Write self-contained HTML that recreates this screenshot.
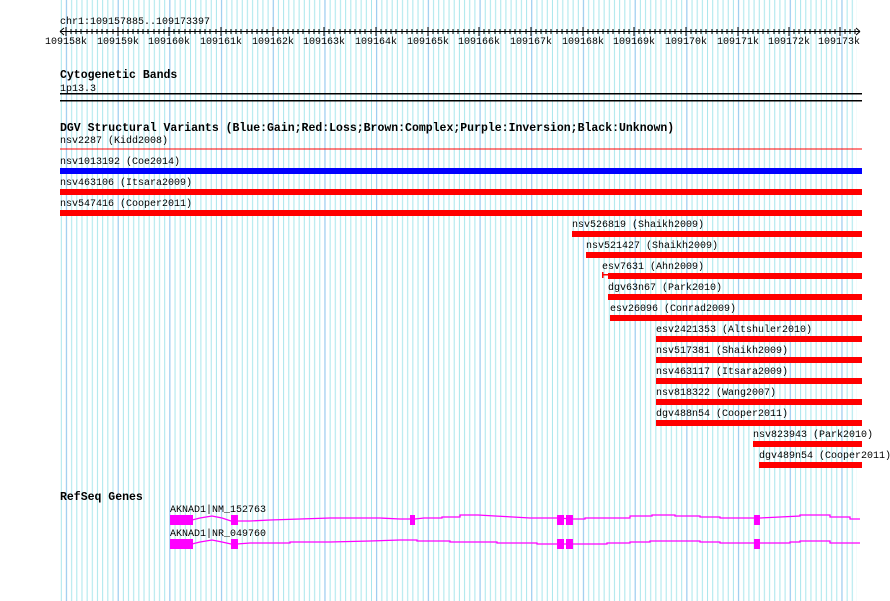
<!DOCTYPE html>
<html><head><meta charset="utf-8"><style>
html,body{margin:0;padding:0;background:#fff;width:890px;height:601px;overflow:hidden}
svg{display:block}
text{font-family:"Liberation Mono",monospace;font-size:10px;fill:#000}
.b{font-weight:bold;font-size:11.5px}
</style></head><body>
<svg width="890" height="601" viewBox="0 0 890 601" xmlns="http://www.w3.org/2000/svg">
<defs>
<pattern id="g" patternUnits="userSpaceOnUse" x="60.8" y="0" width="51.7" height="601">
<g stroke="#a8e6ec" stroke-width="1">
<line x1="0.5" y1="0" x2="0.5" y2="601"/>
<line x1="10.84" y1="0" x2="10.84" y2="601"/>
<line x1="16.01" y1="0" x2="16.01" y2="601"/>
<line x1="21.18" y1="0" x2="21.18" y2="601"/>
<line x1="26.35" y1="0" x2="26.35" y2="601"/>
<line x1="31.52" y1="0" x2="31.52" y2="601"/>
<line x1="36.69" y1="0" x2="36.69" y2="601"/>
<line x1="41.86" y1="0" x2="41.86" y2="601"/>
<line x1="47.03" y1="0" x2="47.03" y2="601"/>
</g>
<line x1="5.67" y1="0" x2="5.67" y2="601" stroke="#86c2ec" stroke-width="1"/>
</pattern>
</defs>
<rect x="60" y="0" width="797" height="601" fill="url(#g)"/>
<!-- ruler -->
<text x="60" y="24">chr1:109157885..109173397</text>
<line x1="60" y1="31.5" x2="860" y2="31.5" stroke="#000"/>
<path d="M60 31.5 L64 28 M60 31.5 L64 35 M860 31.5 L856 28 M860 31.5 L856 35" stroke="#000" fill="none"/>
<g stroke="#000">
<line x1="66" y1="28" x2="66" y2="35"/>
</g>
<path id="ticks" d="" stroke="#000"/>
<g stroke="#000" stroke-width="1" id="tk"></g>
<g text-anchor="middle">
<text x="66" y="44">109158k</text><text x="118" y="44">109159k</text><text x="169" y="44">109160k</text><text x="221" y="44">109161k</text><text x="273" y="44">109162k</text><text x="324" y="44">109163k</text><text x="376" y="44">109164k</text><text x="428" y="44">109165k</text><text x="479" y="44">109166k</text><text x="531" y="44">109167k</text><text x="583" y="44">109168k</text><text x="634" y="44">109169k</text><text x="686" y="44">109170k</text><text x="738" y="44">109171k</text><text x="789" y="44">109172k</text><text x="839" y="44">109173k</text>
</g>
<!-- cytogenetic -->
<text class="b" x="60" y="78">Cytogenetic Bands</text>
<text x="60" y="91">1p13.3</text>
<rect x="60" y="93" width="802" height="1.5" fill="#000"/>
<rect x="60" y="100" width="802" height="1.5" fill="#000"/>
<!-- DGV -->
<text class="b" x="60" y="131">DGV Structural Variants (Blue:Gain;Red:Loss;Brown:Complex;Purple:Inversion;Black:Unknown)</text>
<text x="60" y="143">nsv2287 (Kidd2008)</text>
<rect x="60" y="148.5" width="802" height="1" fill="#f00"/>
<text x="60" y="164">nsv1013192 (Coe2014)</text>
<rect x="60" y="168" width="802" height="6" fill="#00f"/>
<text x="60" y="185">nsv463106 (Itsara2009)</text>
<rect x="60" y="189" width="802" height="6" fill="#f00"/>
<text x="60" y="206">nsv547416 (Cooper2011)</text>
<rect x="60" y="210" width="802" height="6" fill="#f00"/>
<g fill="#f00">
<rect x="572" y="231" width="290" height="6"/>
<rect x="586" y="252" width="276" height="6"/>
<rect x="608" y="273" width="254" height="6"/>
<rect x="602" y="272" width="1.5" height="6"/><rect x="602" y="274" width="6" height="1.5"/>
<rect x="608" y="294" width="254" height="6"/>
<rect x="610" y="315" width="252" height="6"/>
<rect x="656" y="336" width="206" height="6"/>
<rect x="656" y="357" width="206" height="6"/>
<rect x="656" y="378" width="206" height="6"/>
<rect x="656" y="399" width="206" height="6"/>
<rect x="656" y="420" width="206" height="6"/>
<rect x="753" y="441" width="109" height="6"/>
<rect x="759" y="462" width="103" height="6"/>
</g>
<text x="572" y="227">nsv526819 (Shaikh2009)</text>
<text x="586" y="248">nsv521427 (Shaikh2009)</text>
<text x="602" y="269">esv7631 (Ahn2009)</text>
<text x="608" y="290">dgv63n67 (Park2010)</text>
<text x="610" y="311">esv26096 (Conrad2009)</text>
<text x="656" y="332">esv2421353 (Altshuler2010)</text>
<text x="656" y="353">nsv517381 (Shaikh2009)</text>
<text x="656" y="374">nsv463117 (Itsara2009)</text>
<text x="656" y="395">nsv818322 (Wang2007)</text>
<text x="656" y="416">dgv488n54 (Cooper2011)</text>
<text x="753" y="437">nsv823943 (Park2010)</text>
<text x="759" y="458">dgv489n54 (Cooper2011)</text>
<!-- RefSeq -->
<text class="b" x="60" y="500">RefSeq Genes</text>
<text x="170" y="512">AKNAD1|NM_152763</text>
<text x="170" y="536">AKNAD1|NR_049760</text>
<g fill="none" stroke="#f0f" stroke-width="1.3">
<polyline points="192,520 200,518 212,516 222,518 231,521 237,521 250,521 270,520 300,519 330,518 380,518 400,519 415,519 424,518 442,518 442,517 460,517 460,515 478,515 495,516 513,517 530,518 557,518 573,519 585,519 585,518 630,518 630,516 652,516 652,515 675,515 675,516 700,516 700,517 720,517 720,518 760,518 780,517 800,516 800,515 830,515 830,517 850,517 850,519 860,519"/>
<polyline points="192,544 200,542 212,540 222,542 231,544 237,544 250,543 290,543 290,542 330,542 370,541 400,540 417,540 417,541 450,541 450,542 497,542 497,543 537,543 537,544 557,544 573,544 607,544 607,543 630,543 630,542 650,542 650,541 700,541 700,542 720,542 720,543 790,543 790,542 800,542 800,541 830,541 830,543 860,543"/>
</g>
<g fill="#f0f">
<rect x="170" y="515" width="23" height="10"/><rect x="231" y="515" width="7" height="10"/><rect x="410" y="515" width="5" height="10"/><rect x="557" y="515" width="7" height="10"/><rect x="566" y="515" width="7" height="10"/><rect x="754" y="515" width="6" height="10"/>
<rect x="170" y="539" width="23" height="10"/><rect x="231" y="539" width="7" height="10"/><rect x="557" y="539" width="7" height="10"/><rect x="566" y="539" width="7" height="10"/><rect x="754" y="539" width="6" height="10"/>
</g>
<!-- ruler ticks -->
<g stroke="#000" stroke-width="1">
<path d="M66 27v9M118 27v9M169 27v9M221 27v9M273 27v9M324 27v9M376 27v9M428 27v9M479 27v9M531 27v9M583 27v9M634 27v9M686 27v9M738 27v9M789 27v9M840 27v9"/>
<path d="M71 29v5M76 29v5M81 29v5M87 29v5M92 29v5M97 29v5M102 29v5M107 29v5M113 29v5M123 29v5M128 29v5M133 29v5M138 29v5M143 29v5M148 29v5M154 29v5M159 29v5M164 29v5M174 29v5M179 29v5M185 29v5M190 29v5M195 29v5M200 29v5M205 29v5M210 29v5M216 29v5M226 29v5M231 29v5M236 29v5M241 29v5M247 29v5M252 29v5M257 29v5M262 29v5M267 29v5M278 29v5M283 29v5M288 29v5M293 29v5M298 29v5M303 29v5M309 29v5M314 29v5M319 29v5M329 29v5M334 29v5M340 29v5M345 29v5M350 29v5M355 29v5M360 29v5M365 29v5M371 29v5M381 29v5M386 29v5M391 29v5M396 29v5M402 29v5M407 29v5M412 29v5M417 29v5M422 29v5M433 29v5M438 29v5M443 29v5M448 29v5M453 29v5M458 29v5M464 29v5M469 29v5M474 29v5M484 29v5M489 29v5M495 29v5M500 29v5M505 29v5M510 29v5M515 29v5M520 29v5M526 29v5M536 29v5M541 29v5M546 29v5M551 29v5M557 29v5M562 29v5M567 29v5M572 29v5M577 29v5M588 29v5M593 29v5M598 29v5M603 29v5M608 29v5M613 29v5M619 29v5M624 29v5M629 29v5M639 29v5M644 29v5M650 29v5M655 29v5M660 29v5M665 29v5M670 29v5M675 29v5M681 29v5M691 29v5M696 29v5M701 29v5M706 29v5M712 29v5M717 29v5M722 29v5M727 29v5M732 29v5M743 29v5M748 29v5M753 29v5M758 29v5M763 29v5M768 29v5M774 29v5M779 29v5M784 29v5M794 29v5M799 29v5M805 29v5M810 29v5M815 29v5M820 29v5M825 29v5M830 29v5M835 29v5M845 29v5M850 29v5M855 29v5"/>
</g>
</svg>
</body></html>
